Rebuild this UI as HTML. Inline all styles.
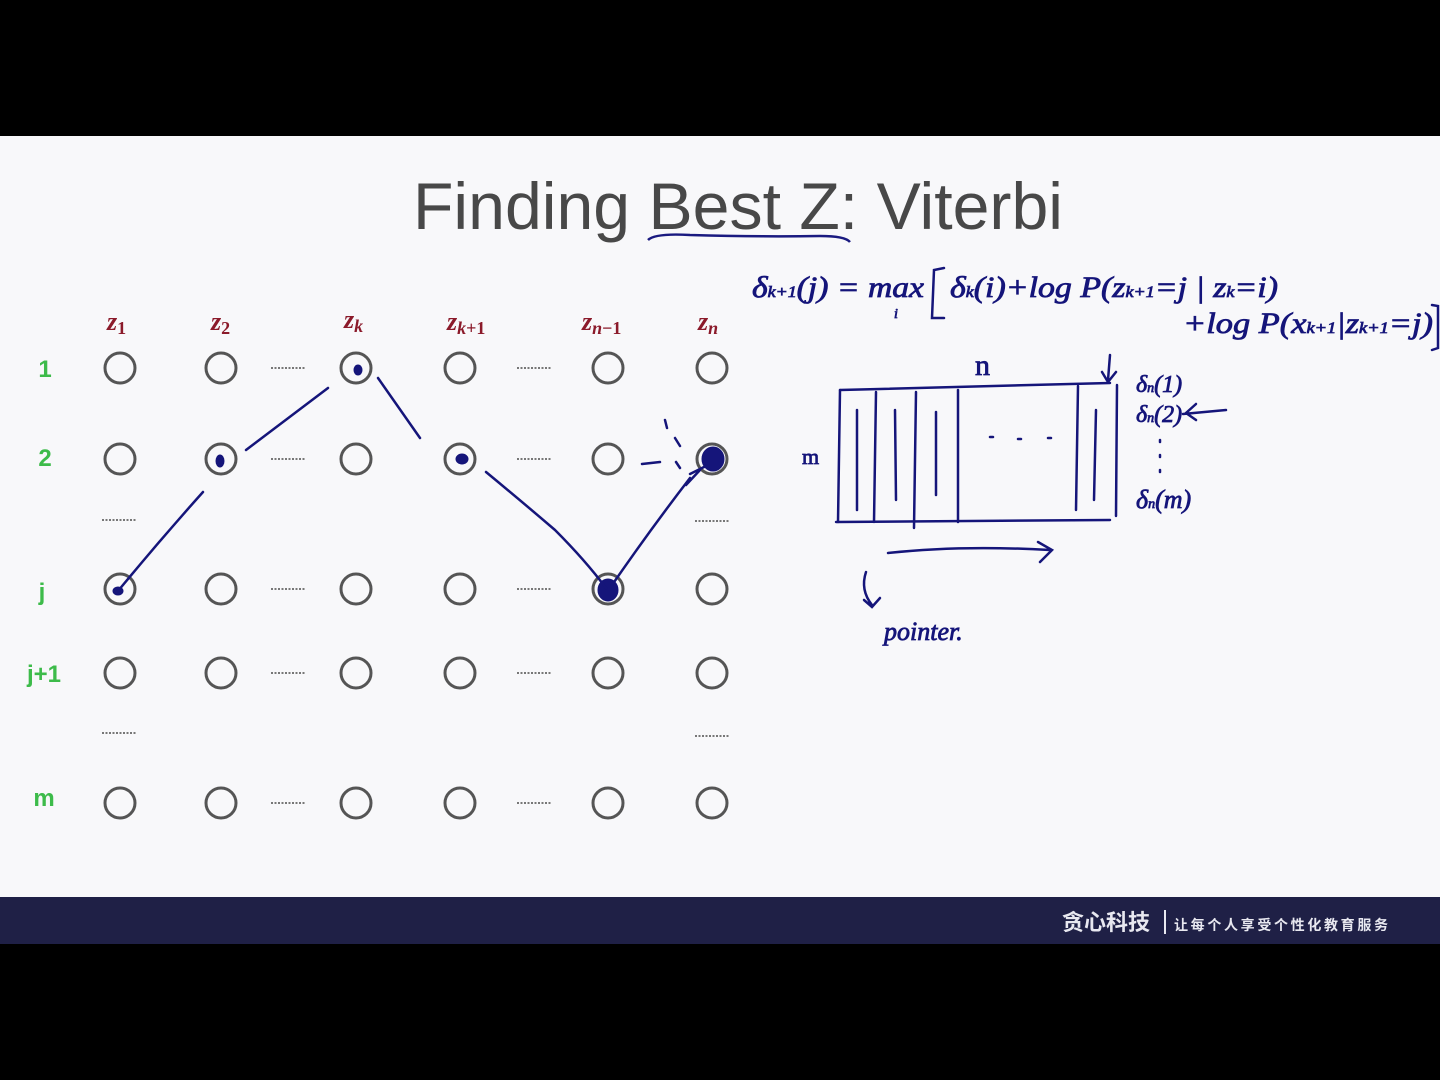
<!DOCTYPE html>
<html><head><meta charset="utf-8"><style>
html,body{margin:0;padding:0;background:#000;width:1440px;height:1080px;overflow:hidden}
svg{display:block}
</style></head><body>
<svg width="1440" height="1080" viewBox="0 0 1440 1080" xmlns="http://www.w3.org/2000/svg">
<rect x="0" y="0" width="1440" height="1080" fill="#000"/>
<rect x="0" y="136" width="1440" height="762" fill="#f8f8fa"/>
<rect x="0" y="897" width="1440" height="47" fill="#1f2046"/>
<text x="1062" y="930" font-family="Noto Sans CJK SC, sans-serif" font-size="22" font-weight="bold" fill="#e8e8f0">贪心科技</text>
<rect x="1164" y="910" width="2" height="24" fill="#e8e8f0"/>
<text x="1174" y="930" font-family="Noto Sans CJK SC, sans-serif" font-size="14" font-weight="bold" fill="#e8e8f0" textLength="214">让每个人享受个性化教育服务</text>

<text x="413" y="229" font-family="Liberation Sans, sans-serif" font-size="66" fill="#484848" textLength="650" lengthAdjust="spacingAndGlyphs">Finding Best Z: Viterbi</text>
<path d="M648 240 Q655 233 690 235 Q760 237 820 236 Q845 236 850 242" stroke="#1a1a80" stroke-width="2.5" fill="none"/>

<g font-family="Liberation Serif, serif" font-style="italic" font-weight="bold" fill="#8b1a2a" font-size="26">
<text x="107" y="330">z<tspan font-size="18" font-style="normal" dy="4">1</tspan></text>
<text x="211" y="330">z<tspan font-size="18" font-style="normal" dy="4">2</tspan></text>
<text x="344" y="328">z<tspan font-size="18" dy="4">k</tspan></text>
<text x="447" y="330">z<tspan font-size="18" dy="4">k</tspan><tspan font-size="18" font-style="normal">+1</tspan></text>
<text x="582" y="330">z<tspan font-size="18" dy="4">n</tspan><tspan font-size="18" font-style="normal">−1</tspan></text>
<text x="698" y="330">z<tspan font-size="18" dy="4">n</tspan></text>
</g>

<g font-family="Liberation Sans, sans-serif" font-weight="bold" fill="#3dbb4a" font-size="24" text-anchor="middle">
<text x="45" y="377">1</text>
<text x="45" y="466">2</text>
<text x="42" y="600">j</text>
<text x="44" y="682">j+1</text>
<text x="44" y="806">m</text>
</g>

<g stroke="#555" stroke-width="3" fill="none">
<ellipse cx="120" cy="368" rx="15" ry="15"/><ellipse cx="221" cy="368" rx="15" ry="15"/><ellipse cx="356" cy="368" rx="15" ry="15"/><ellipse cx="460" cy="368" rx="15" ry="15"/><ellipse cx="608" cy="368" rx="15" ry="15"/><ellipse cx="712" cy="368" rx="15" ry="15"/>
<ellipse cx="120" cy="459" rx="15" ry="15"/><ellipse cx="221" cy="459" rx="15" ry="15"/><ellipse cx="356" cy="459" rx="15" ry="15"/><ellipse cx="460" cy="459" rx="15" ry="15"/><ellipse cx="608" cy="459" rx="15" ry="15"/><ellipse cx="712" cy="459" rx="15" ry="15"/>
<ellipse cx="120" cy="589" rx="15" ry="15"/><ellipse cx="221" cy="589" rx="15" ry="15"/><ellipse cx="356" cy="589" rx="15" ry="15"/><ellipse cx="460" cy="589" rx="15" ry="15"/><ellipse cx="608" cy="589" rx="15" ry="15"/><ellipse cx="712" cy="589" rx="15" ry="15"/>
<ellipse cx="120" cy="673" rx="15" ry="15"/><ellipse cx="221" cy="673" rx="15" ry="15"/><ellipse cx="356" cy="673" rx="15" ry="15"/><ellipse cx="460" cy="673" rx="15" ry="15"/><ellipse cx="608" cy="673" rx="15" ry="15"/><ellipse cx="712" cy="673" rx="15" ry="15"/>
<ellipse cx="120" cy="803" rx="15" ry="15"/><ellipse cx="221" cy="803" rx="15" ry="15"/><ellipse cx="356" cy="803" rx="15" ry="15"/><ellipse cx="460" cy="803" rx="15" ry="15"/><ellipse cx="608" cy="803" rx="15" ry="15"/><ellipse cx="712" cy="803" rx="15" ry="15"/>
</g>
<g stroke="#777" stroke-width="2" stroke-dasharray="2 1.5">
<path d="M271 368h34M517 368h34M271 459h34M517 459h34M271 589h34M517 589h34M271 673h34M517 673h34M271 803h34M517 803h34M102 520h34M695 521h34M102 733h34M695 736h34"/>
</g>

<g fill="#15157a" stroke="#15157a">
<ellipse cx="358" cy="370" rx="4" ry="5"/>
<ellipse cx="220" cy="461" rx="4" ry="6"/>
<ellipse cx="462" cy="459" rx="6" ry="5"/>
<ellipse cx="713" cy="459" rx="11" ry="12"/>
<ellipse cx="118" cy="591" rx="5" ry="4"/>
<ellipse cx="608" cy="590" rx="10" ry="11"/>
</g>
<g stroke="#15157a" stroke-width="2.5" fill="none" stroke-linecap="round">
<path d="M246 450 L328 388"/>
<path d="M378 378 L420 438"/>
<path d="M118 591 Q160 540 203 492"/>
<path d="M486 472 Q520 500 555 530 Q585 560 606 588"/>
<path d="M612 585 Q650 530 690 478"/>
<path d="M686 485 L700 470 M690 474 L706 466"/>
<path d="M642 464 L660 462"/>
<path d="M665 420 L667 428 M675 438 L680 446 M676 462 L680 468"/>

<g stroke-width="0.8">
<text x="752" y="297" font-family="Liberation Serif, serif" font-style="italic" font-size="30" fill="#15157a" textLength="172" lengthAdjust="spacingAndGlyphs">δ<tspan font-size="16">k+1</tspan>(j) = max</text>
<text x="950" y="297" font-family="Liberation Serif, serif" font-style="italic" font-size="30" fill="#15157a" textLength="328" lengthAdjust="spacingAndGlyphs">δ<tspan font-size="16">k</tspan>(i)+log P(z<tspan font-size="16">k+1</tspan>=j | z<tspan font-size="16">k</tspan>=i)</text>
<text x="1183" y="333" font-family="Liberation Serif, serif" font-style="italic" font-size="30" fill="#15157a" textLength="250" lengthAdjust="spacingAndGlyphs">+log P(x<tspan font-size="16">k+1</tspan>|z<tspan font-size="16">k+1</tspan>=j)</text>
<text x="894" y="318" font-family="Liberation Serif, serif" font-style="italic" font-size="14" fill="#15157a">i</text>
</g>
<path d="M944 268 L934 270 L932 318 L944 318"/>
<path d="M1432 305 L1438 306 L1438 348 L1432 350"/>

<path d="M840 390 L1110 383"/>
<path d="M836 522 L1110 520"/>
<path d="M840 390 L838 522 M876 392 L874 522 M916 392 L914 528 M958 390 L958 522 M1078 386 L1076 510 M1117 385 L1116 516"/>
<path d="M857 410 L857 510 M895 410 L896 500 M936 412 L936 495 M1096 410 L1094 500"/>
<path d="M990 437 h3 M1018 439 h3 M1048 438 h3"/>
<path d="M888 553 Q960 545 1050 550 M1038 542 L1052 550 L1040 562"/>
<path d="M1110 355 L1108 380 M1102 372 L1108 382 L1116 372"/>
<path d="M866 572 Q860 590 872 605 M864 600 L872 607 L880 598"/>
<path d="M1183 414 L1226 410 M1196 404 L1186 413 L1196 420"/>
<path d="M1160 440 v2 M1160 455 v2 M1160 470 v2"/>
<g stroke-width="0.8">
<text x="975" y="375" font-family="Liberation Serif, serif" font-size="30" fill="#15157a">n</text>
<text x="802" y="464" font-family="Liberation Serif, serif" font-size="22" fill="#15157a">m</text>
<text x="1136" y="392" font-family="Liberation Serif, serif" font-style="italic" font-size="24" fill="#15157a">δ<tspan font-size="14">n</tspan>(1)</text>
<text x="1136" y="422" font-family="Liberation Serif, serif" font-style="italic" font-size="24" fill="#15157a">δ<tspan font-size="14">n</tspan>(2)</text>
<text x="1136" y="508" font-family="Liberation Serif, serif" font-style="italic" font-size="26" fill="#15157a">δ<tspan font-size="14">n</tspan>(m)</text>
<text x="884" y="640" font-family="Liberation Serif, serif" font-style="italic" font-size="26" fill="#15157a">pointer.</text>
</g>
</g>
</svg>
</body></html>
